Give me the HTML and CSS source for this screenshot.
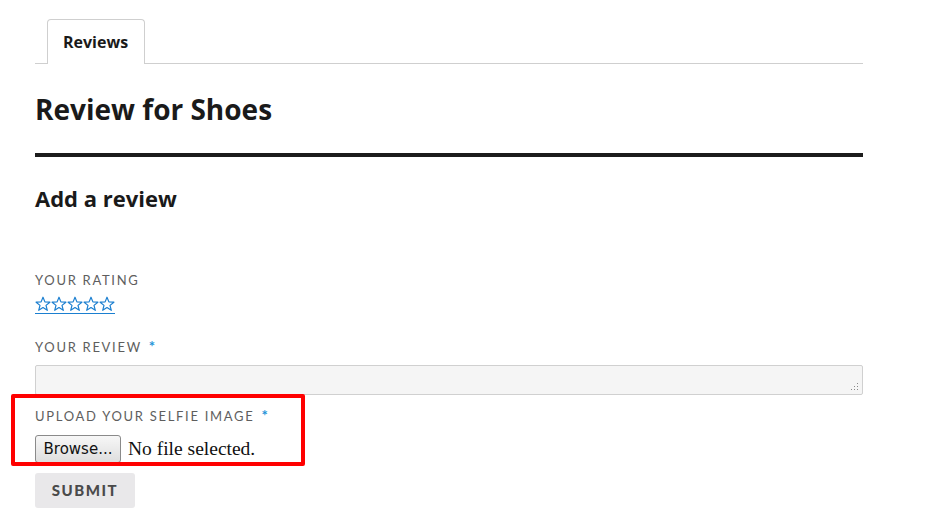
FILE: index.html
```html
<!DOCTYPE html>
<html>
<head>
<meta charset="utf-8">
<link rel="stylesheet" href="styles.css">
</head>
<body>
<div class="page">
  <div class="tabs">
    <div class="tab">Reviews</div>
  </div>
  <h1 class="title">Review for Shoes</h1>
  <div class="rule"></div>
  <h2 class="subtitle">Add a review</h2>
  <form class="form">
    <div class="field field-rating">
      <div class="label">Your rating</div>
      <a class="stars" href="#" aria-label="rating">
        <svg class="star" viewBox="0 0 16 16"><path d="M8 1.2 L9.9 5.9 L14.9 6.2 L11 9.4 L12.3 14.3 L8 11.6 L3.7 14.3 L5 9.4 L1.1 6.2 L6.1 5.9 Z"/></svg>
        <svg class="star" viewBox="0 0 16 16"><path d="M8 1.2 L9.9 5.9 L14.9 6.2 L11 9.4 L12.3 14.3 L8 11.6 L3.7 14.3 L5 9.4 L1.1 6.2 L6.1 5.9 Z"/></svg>
        <svg class="star" viewBox="0 0 16 16"><path d="M8 1.2 L9.9 5.9 L14.9 6.2 L11 9.4 L12.3 14.3 L8 11.6 L3.7 14.3 L5 9.4 L1.1 6.2 L6.1 5.9 Z"/></svg>
        <svg class="star" viewBox="0 0 16 16"><path d="M8 1.2 L9.9 5.9 L14.9 6.2 L11 9.4 L12.3 14.3 L8 11.6 L3.7 14.3 L5 9.4 L1.1 6.2 L6.1 5.9 Z"/></svg>
        <svg class="star" viewBox="0 0 16 16"><path d="M8 1.2 L9.9 5.9 L14.9 6.2 L11 9.4 L12.3 14.3 L8 11.6 L3.7 14.3 L5 9.4 L1.1 6.2 L6.1 5.9 Z"/></svg>
      </a>
    </div>
    <div class="field field-review">
      <div class="label">Your review <span class="req">*</span></div>
      <div class="textarea">
        <svg class="grip" viewBox="0 0 8 8"><rect x="6" y="0" width="1" height="1"/><rect x="6" y="3" width="1" height="1"/><rect x="3" y="3" width="1" height="1"/><rect x="6" y="6" width="1" height="1"/><rect x="3" y="6" width="1" height="1"/><rect x="0" y="6" width="1" height="1"/></svg>
      </div>
    </div>
    <div class="field field-upload">
      <div class="label">Upload your selfie image <span class="req">*</span></div>
      <div class="file">
        <span class="browse">Browse...</span>
        <span class="nofile">No file selected.</span>
      </div>
    </div>
    <div class="submit">Submit</div>
  </form>
</div>
</body>
</html>
```
FILE: styles.css
```css
html, body { margin: 0; padding: 0; background: #fff; }
body { font-family: "Open Sans", sans-serif; color: #1a1a1a; }
.page { width: 828px; margin-left: 35px; }

.tabs {
  margin-top: 19px;
  border-bottom: 1px solid #cfcfcf;
  display: flex;
  padding-left: 12px;
}
.tab {
  border: 1px solid #cfcfcf;
  border-bottom: none;
  border-radius: 4px 4px 0 0;
  padding: 0 16px 0 15px;
  height: 44px;
  line-height: 45px;
  font-size: 16px;
  font-weight: 700;
  color: #1a1a1a;
  margin-bottom: -1px;
  background: #fff;
}

.title {
  font-size: 28px;
  font-weight: 700;
  margin: 23px 0 0;
  line-height: 44px;
}
.rule {
  height: 4px;
  background: #1c1c1c;
  margin-top: 22px;
}
.subtitle {
  font-size: 22px;
  font-weight: 700;
  margin: 26px 0 0;
  line-height: 30px;
}

.form { margin-top: 59px; }
.label {
  font-family: "Lato", sans-serif;
  font-size: 13px;
  letter-spacing: 1.7px;
  text-transform: uppercase;
  color: #5e5e5e;
  line-height: 16px;
}
.req {
  color: #1f95d9;
  font-weight: 700;
  font-size: 15px;
  margin-left: 2px;
}

.stars {
  display: inline-flex;
  text-decoration: none;
  border-bottom: 1px solid #1b7fd0;
  margin-top: 8px;
  padding-bottom: 1px;
}
.star {
  width: 16px;
  height: 16px;
  fill: none;
  stroke: #1b7fd0;
  stroke-width: 1.2;
  stroke-linejoin: round;
}

.field-review { margin-top: 21px; }
.textarea {
  margin-top: 10px;
  height: 28px;
  background: #f5f5f5;
  border: 1px solid #d0d0d0;
  border-radius: 2px;
  position: relative;
}
.grip {
  position: absolute;
  right: 3px;
  bottom: 3px;
  width: 8px;
  height: 8px;
  fill: #8a8a8a;
}

.field-upload { margin-top: 12px; position: relative; }
.field-upload::after {
  content: "";
  position: absolute;
  left: -24px;
  top: -13px;
  width: 294px;
  height: 72px;
  border: 4px solid #f00;
  box-sizing: border-box;
  border-radius: 2px;
}
.file {
  margin-top: 11px;
  display: flex;
  align-items: center;
  gap: 7px;
}
.browse {
  display: inline-block;
  font-family: "DejaVu Sans", sans-serif;
  font-size: 15px;
  color: #111;
  width: 86px;
  height: 28px;
  line-height: 26px;
  text-align: center;
  box-sizing: border-box;
  border: 1px solid #8a8a8a;
  border-radius: 3px;
  background: linear-gradient(#f7f7f7, #dedede);
}
.nofile {
  font-family: "Liberation Serif", serif;
  font-size: 19.5px;
  color: #111;
}

.submit {
  margin-top: 10px;
  width: 100px;
  height: 35px;
  line-height: 35px;
  text-align: center;
  background: #e9e8ea;
  border-radius: 3px;
  font-family: "Lato", sans-serif;
  font-weight: 900;
  font-size: 15px;
  letter-spacing: 1.5px;
  text-transform: uppercase;
  color: #4a4a4a;
}
```
